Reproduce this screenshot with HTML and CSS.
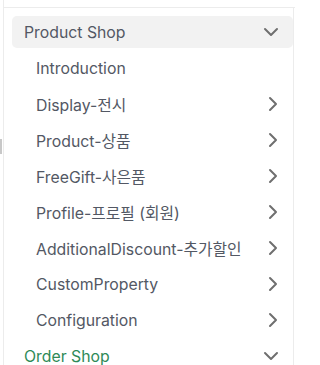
FILE: index.html
```html
<!DOCTYPE html>
<html>
<head>
<meta charset="utf-8">
<link rel="stylesheet" href="styles.css">
</head>
<body>
<div class="frame">
  <div class="topbar"></div>
  <div class="thumb"></div>
  <nav class="sidebar">
    <div class="group-head active">
      <span>Product Shop</span>
      <svg class="chev-down" viewBox="0 0 16 10"><path d="M2 2l6 6 6-6"/></svg>
    </div>
    <ul class="items">
      <li class="item"><span>Introduction</span></li>
      <li class="item"><span>Display-전시</span><svg class="chev-right" viewBox="0 0 10 16"><path d="M2 2l6 6-6 6"/></svg></li>
      <li class="item"><span>Product-상품</span><svg class="chev-right" viewBox="0 0 10 16"><path d="M2 2l6 6-6 6"/></svg></li>
      <li class="item"><span>FreeGift-사은품</span><svg class="chev-right" viewBox="0 0 10 16"><path d="M2 2l6 6-6 6"/></svg></li>
      <li class="item"><span>Profile-프로필 (회원)</span><svg class="chev-right" viewBox="0 0 10 16"><path d="M2 2l6 6-6 6"/></svg></li>
      <li class="item"><span>AdditionalDiscount-추가할인</span><svg class="chev-right" viewBox="0 0 10 16"><path d="M2 2l6 6-6 6"/></svg></li>
      <li class="item"><span>CustomProperty</span><svg class="chev-right" viewBox="0 0 10 16"><path d="M2 2l6 6-6 6"/></svg></li>
      <li class="item"><span>Configuration</span><svg class="chev-right" viewBox="0 0 10 16"><path d="M2 2l6 6-6 6"/></svg></li>
    </ul>
    <div class="group-head green">
      <span>Order Shop</span>
      <svg class="chev-down" viewBox="0 0 16 10"><path d="M2 2l6 6 6-6"/></svg>
    </div>
  </nav>
</div>
</body>
</html>
```
FILE: styles.css
```css
html, body {
  margin: 0;
  padding: 0;
  background: #ffffff;
  overflow: hidden;
}
body {
  font-family: Inter, "Noto Sans CJK KR", sans-serif;
  font-size: 15.8px;
  color: #535864;
}
.frame {
  position: relative;
  width: 295px;
  height: 365px;
  overflow: hidden;
}
.topbar {
  margin-left: 3px;
  height: 7px;
  border-bottom: 1px solid #ececec;
  border-left: 1px solid #ececec;
}
.thumb {
  position: absolute;
  left: 0;
  top: 139px;
  width: 2px;
  height: 15px;
  background: #c8c8c8;
}
.sidebar {
  margin-left: 3px;
  width: 291px;
  height: 400px;
  border-left: 1px solid #ececec;
  border-right: 1px solid #ececec;
  padding: 8px 0 0 8px;
  box-sizing: border-box;
}
.group-head {
  display: flex;
  align-items: center;
  justify-content: space-between;
  height: 32px;
  padding: 0 14px 0 12px;
  border-radius: 5px;
  box-sizing: border-box;
}
.group-head.active {
  background: #f2f2f2;
  margin-bottom: 2px;
}
.group-head.green {
  color: #2e8a57;
  height: 36px;
}
.chev-down {
  width: 16px;
  height: 10px;
  fill: none;
  stroke: #6f6f6f;
  stroke-width: 2;
  stroke-linecap: round;
  stroke-linejoin: round;
}
.items {
  list-style: none;
  margin: 0;
  padding: 0;
}
.item {
  display: flex;
  align-items: center;
  justify-content: space-between;
  height: 36px;
  padding: 0 15px 0 24px;
}
.chev-right {
  width: 10px;
  height: 16px;
  fill: none;
  stroke: #6f6f6f;
  stroke-width: 2;
  stroke-linecap: round;
  stroke-linejoin: round;
}
```
